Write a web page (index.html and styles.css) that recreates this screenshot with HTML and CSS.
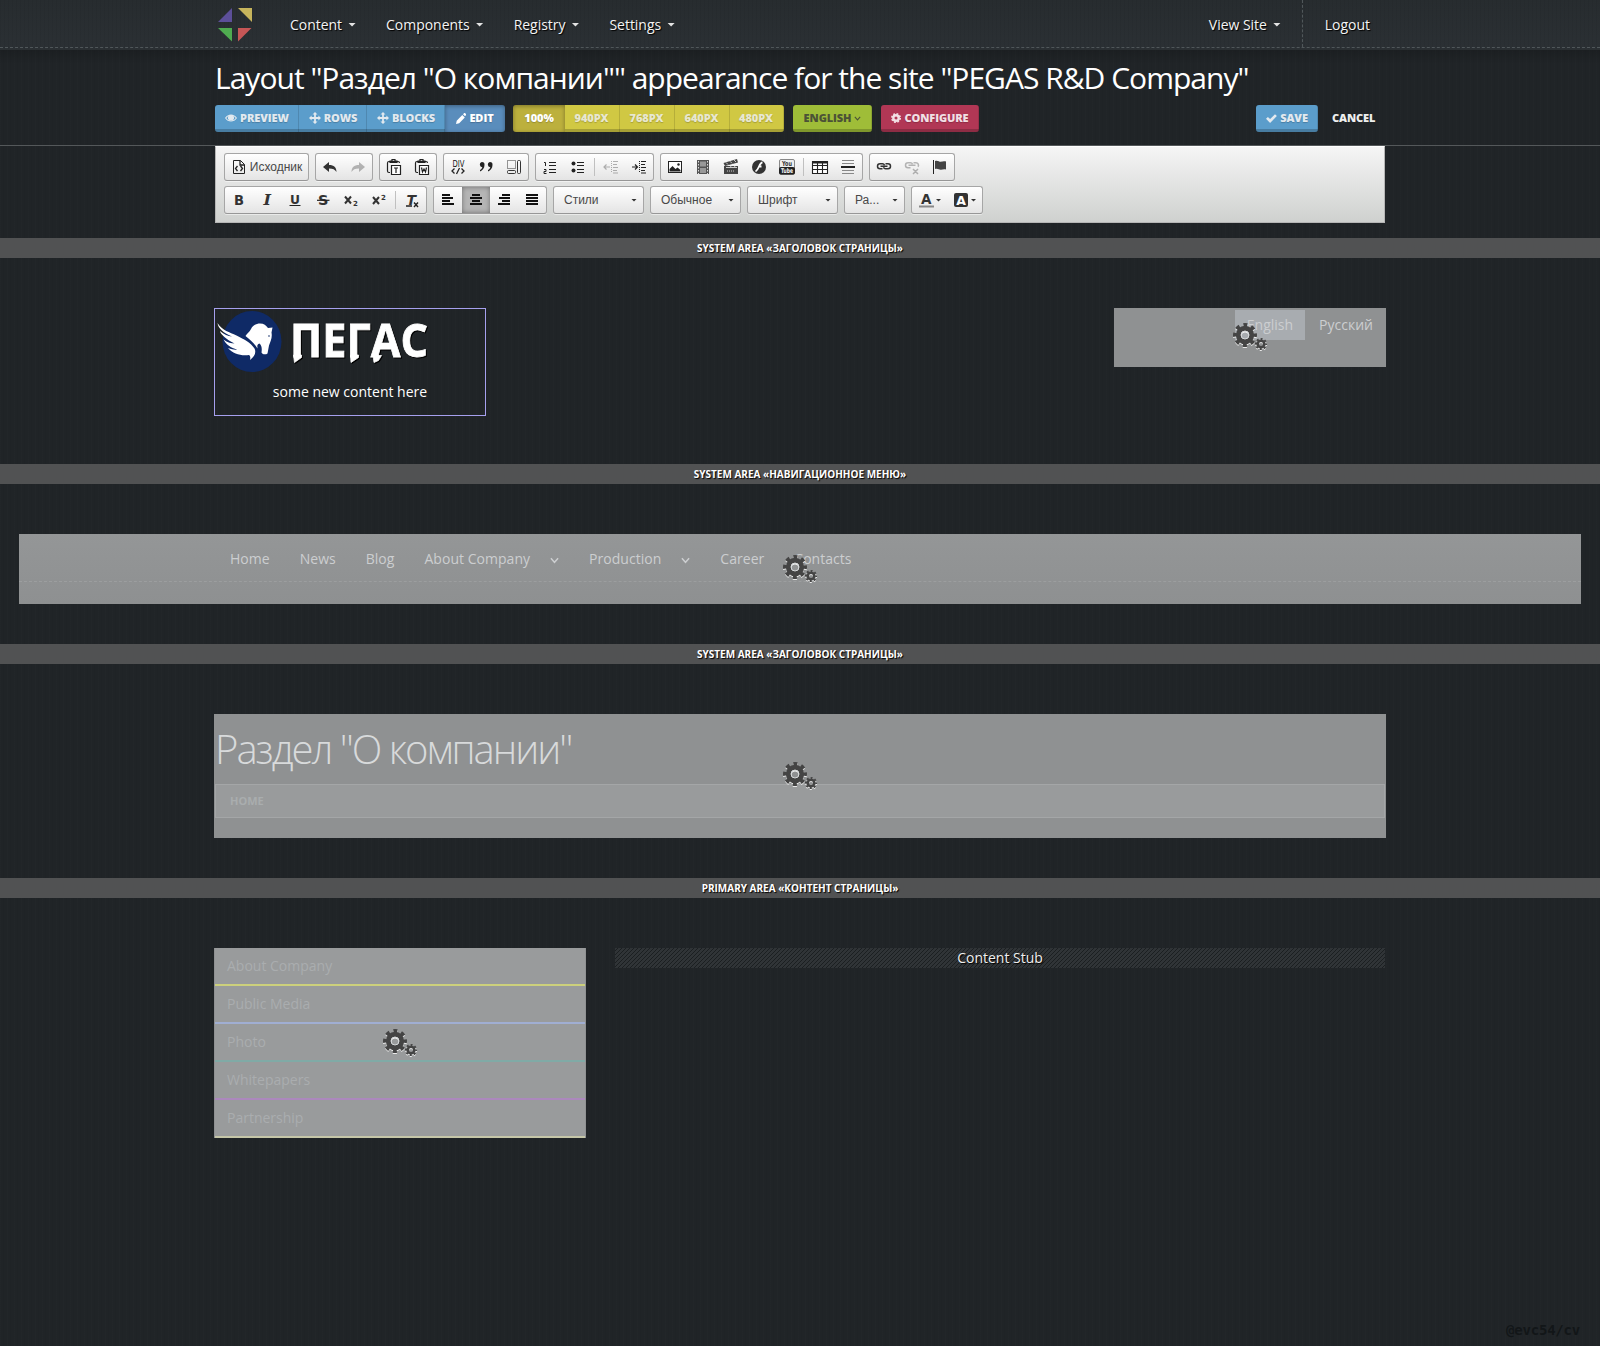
FILE: index.html
```html
<!DOCTYPE html>
<html lang="en">
<head>
<meta charset="utf-8">
<title>Layout appearance</title>
<link rel="stylesheet" href="styles.css">
</head>
<body>
<svg class="sprite" width="0" height="0">
  <symbol id="gears" viewBox="0 0 35 28">
    <g fill="none" stroke="#444">
      <circle cx="12" cy="12" r="10" stroke-width="4" stroke-dasharray="3.9 3.954" stroke-dashoffset="1.95"/>
      <circle cx="12" cy="12" r="6.6" stroke-width="5.2"/>
      <circle cx="28" cy="21" r="5" stroke-width="2.2" stroke-dasharray="1.9 2.027" stroke-dashoffset=".95"/>
      <circle cx="28" cy="21" r="3.3" stroke-width="2.6"/>
      <circle cx="12" cy="12" r="4" stroke="#d5d8da" stroke-width="1"/>
    </g>
  </symbol>
  <symbol id="move" viewBox="0 0 12 12"><path d="M6 0l2.500 2.600H6.900v2.500h2.500V3.500L12 6 9.400 8.500V6.900H6.900v2.500h1.600L6 12 3.500 9.400h1.600V6.900H2.600v1.600L0 6l2.600-2.500v1.600h2.500V2.600H3.500z"/></symbol>
  <symbol id="chev" viewBox="0 0 8 6"><path d="M.8 1L4 4.600 7.200 1" fill="none" stroke="currentColor" stroke-width="1.300"/></symbol>
</svg>

<header class="navbar">
  <div class="container nav-row">
    <a class="brand"><svg width="34" height="34" viewBox="0 0 34 34"><path fill="#5c4f99" d="M14 0v14H0z"/><path fill="#c6b45c" d="M20 0h14v14z"/><path fill="#4fab50" d="M0 20h14v13.500z"/><path fill="#c65656" d="M20 20h13.500L20 33.500z"/></svg></a>
    <nav class="menu"><a>Content<i class="caret"></i></a><a>Components<i class="caret"></i></a><a>Registry<i class="caret"></i></a><a>Settings<i class="caret"></i></a></nav>
    <nav class="menu side"><a class="view">View Site<i class="caret"></i></a><a class="logout">Logout</a></nav>
  </div>
</header>

<section class="heading">
  <div class="container">
    <h1>Layout "Раздел "О компании"" appearance for the site "PEGAS R&amp;D Company"</h1>
    <div class="actions">
      <div class="group blue">
        <a class="btn w84"><svg width="12" height="10" viewBox="0 0 12 10"><path fill-rule="evenodd" d="M0 5C2.800.2 9.200.2 12 5 9.200 9.800 2.800 9.800 0 5zm1.300 0c2.200 3.500 7.200 3.500 9.400 0C9.700 3.600 8.500 2.900 8.200 2.700a3 3 0 1 1-4.400 0C3 3.100 2 3.900 1.300 5z"/><circle cx="6" cy="4.600" r="1.700"/></svg>PREVIEW</a><a class="btn w68"><svg width="12" height="12"><use href="#move"/></svg>ROWS</a><a class="btn w78"><svg width="12" height="12"><use href="#move"/></svg>BLOCKS</a><a class="btn w60 active"><svg width="10" height="11" viewBox="0 0 10 11"><path d="M0 11l.7-3.300L6.300 2l2.500 2.600-5.600 5.700zM7 1.300L8 .3c.4-.4.900-.3 1.300 0l.6.700c.3.400.3.900 0 1.200l-.9 1z"/></svg>EDIT</a>
      </div>
      <div class="group yellow"><a class="btn w52 active">100%</a><a class="btn w55">940PX</a><a class="btn w55">768PX</a><a class="btn w55">640PX</a><a class="btn w54">480PX</a></div>
      <div class="group green"><a class="btn w79">ENGLISH<svg class="down" width="7" height="5"><use href="#chev"/></svg></a></div>
      <div class="group red"><a class="btn w98"><svg width="10" height="10" viewBox="0 0 10 10"><circle cx="5" cy="5" r="2.700" fill="none" stroke="currentColor" stroke-width="2.400"/><circle cx="5" cy="5" r="4.200" fill="none" stroke="currentColor" stroke-width="1.600" stroke-dasharray="1.800 1.500"/></svg>CONFIGURE</a></div>
      <div class="group blue save"><a class="btn w62"><svg width="11" height="9" viewBox="0 0 11 9"><path d="M0 4.800l1.900-1.900 2.200 2.200L9 .2l1.900 1.900L4.100 9z"/></svg>SAVE</a></div>
      <a class="cancel">CANCEL</a>
    </div>
  </div>
</section>

<div class="container editor">
  <div class="tools">
    <div class="tg"><a class="tb source"><svg viewBox="0 0 16 16"><path d="M2.500 1.500h7l4 4v9h-11z" fill="none" stroke="#222"/><path d="M9 1.500V6h4.500M6.500 7L4.500 9.500l2 2.500M9.500 7l2 2.500-2 2.500" fill="none" stroke="#222" stroke-width="1.300"/></svg>Исходник</a></div>
    <div class="tg"><a class="tb"><svg viewBox="0 0 16 16"><path d="M1 8l6-5v3c5 0 7.500 2.500 7.500 7C13 10.500 11 9.500 7 9.500V13z" fill="#333"/></svg></a><a class="tb off"><svg viewBox="0 0 16 16"><path d="M15 8L9 3v3c-5 0-7.500 2.500-7.500 7C3 10.500 5 9.500 9 9.500V13z" fill="#333"/></svg></a></div>
    <div class="tg"><a class="tb"><svg viewBox="0 0 16 16"><path d="M4 13.500H3q-1.500 0-1.500-1.500V4q0-1.500 1.500-1.500h9q1.500 0 1.500 1.500M4 3.500V2h2V.7h3V2h2v1.500z" fill="none" stroke="#222" stroke-width="1.200"/><path d="M5.500 6.500h9v9h-9zM8 9h4M10 9v5" fill="#fff" stroke="#222" stroke-width="1.200"/></svg></a><a class="tb"><svg viewBox="0 0 16 16"><path d="M4 13.500H3q-1.500 0-1.500-1.500V4q0-1.500 1.500-1.500h9q1.500 0 1.500 1.500M4 3.500V2h2V.7h3V2h2v1.500z" fill="none" stroke="#222" stroke-width="1.200"/><path d="M5.500 6.500h9v9h-9zM7.500 8.500l1 4.500L10 10l1.500 3 1-4.500" fill="#fff" stroke="#222" stroke-width="1.200"/></svg></a></div>
    <div class="tg"><a class="tb"><svg viewBox="0 0 16 16"><text class="thin" x="2.500" y="7.500" font-size="9" textLength="12" lengthAdjust="spacingAndGlyphs">DIV</text><path d="M4.500 9.500L2 12l2.500 2.500M11.500 9.500L14 12l-2.500 2.500M9.500 9l-3 6" fill="none" stroke="#222" stroke-width="1.300"/></svg></a><a class="tb"><svg viewBox="0 0 16 16"><path d="M3.800 3A2.700 2.700 0 0 1 6.500 6c0 3-2 5.500-4.500 6.500V11c1.300-.6 2.100-1.600 2.300-2.700A2.700 2.700 0 0 1 3.800 3zm8 0a2.700 2.700 0 0 1 2.700 3c0 3-2 5.500-4.500 6.500V11c1.300-.6 2.100-1.600 2.300-2.700A2.700 2.700 0 0 1 11.800 3z"/></svg></a><a class="tb"><svg viewBox="0 0 16 16"><g fill="none" stroke="#333"><path d="M1.500 1.500h8v8h-8z" stroke-dasharray="1 1"/><rect x="1.500" y="11.500" width="8" height="3" rx="1"/><rect x="11.500" y="1.500" width="3" height="13" rx="1"/></g></svg></a></div>
    <div class="tg"><a class="tb"><svg viewBox="0 0 16 16"><path d="M2 3.500h1.500V7M2 10.500h2v2H2v2h2.500" fill="none" stroke="#222"/><path d="M7 3.500h7M7 6.500h7M7 10.500h7M7 13.500h7" stroke="#222" stroke-width="1.200"/></svg></a><a class="tb"><svg viewBox="0 0 16 16"><circle cx="3.500" cy="4.500" r="2"/><circle cx="3.500" cy="11.500" r="2"/><path d="M7 3.500h7M7 6.500h7M7 10.500h7M7 13.500h7" stroke="#222" stroke-width="1.200"/></svg></a><i class="sep"></i><a class="tb off"><svg viewBox="0 0 16 16"><path d="M8.500 2v12" stroke="#222" stroke-dasharray="1 1"/><path d="M10 2.500h5M10 5.500h4M10 8.500h5M10 11.500h4M10 14h5M1 8h6M3.500 5.500L1 8l2.500 2.500" fill="none" stroke="#222" stroke-width="1.200"/></svg></a><a class="tb"><svg viewBox="0 0 16 16"><path d="M8.500 2v12" stroke="#222" stroke-dasharray="1 1"/><path d="M10 2.500h5M10 5.500h4M10 8.500h5M10 11.500h4M10 14h5M1 8h5M4 5.500L6.500 8 4 10.500" fill="none" stroke="#222" stroke-width="1.200"/></svg></a></div>
    <div class="tg"><a class="tb"><svg viewBox="0 0 16 16"><rect x="1.500" y="2.500" width="13" height="11" fill="#fff" stroke="#222"/><path d="M2.500 12.500V10l3-3 3 3 2-1.500 3 2.500v1.500z"/><circle cx="11.500" cy="5.500" r="1.200"/></svg></a><a class="tb"><svg viewBox="0 0 16 16"><path fill="#555" d="M2 1h12v14H2z"/><path d="M5 2.500h6v5H5zM5 9h6v5H5z" fill="#999"/><path d="M3.500 2v13M12.500 2v13" stroke="#ddd" stroke-dasharray="1.500 1.500"/></svg></a><a class="tb"><svg viewBox="0 0 16 16"><path d="M1 7h14v8H1zM.5 4L14 0l1 3.500L2 7z" fill="#444"/><path d="M3 3.500l2 2M7 2.300l2 2M11 1l2 2M3 8.500h11M8 7l-1 2M12 7l-1 2" stroke="#ccc"/><path d="M4 12h8" stroke="#888" stroke-width="2" stroke-dasharray="1 1"/></svg></a><a class="tb"><svg viewBox="0 0 16 16"><circle cx="8" cy="8" r="7" fill="#333"/><path d="M11.500 3.500C8 3.500 8 11 4.500 12.500M7.500 7.500h3" fill="none" stroke="#fff" stroke-width="1.800"/></svg></a><a class="tb"><svg viewBox="0 0 16 16"><rect x=".5" y=".5" width="15" height="15" rx="1.500" fill="#eee" stroke="#888"/><text x="3" y="7" font-size="7" textLength="10" lengthAdjust="spacingAndGlyphs">You</text><rect x="0" y="8" width="16" height="7.500" rx="2"/><text class="inv" x="2" y="14" font-size="6.500" textLength="12" lengthAdjust="spacingAndGlyphs">Tube</text></svg></a><i class="sep"></i><a class="tb"><svg viewBox="0 0 16 16"><path d="M.5 2.500h15v12H.5zM.5 6.500h15M.5 10.500h15M5.500 4v10.500M10.500 4v10.500" fill="#fff" stroke="#222" stroke-width="1.100"/><path d="M0 2h16v2.500H0z"/></svg></a><a class="tb"><svg viewBox="0 0 16 16"><path d="M2 1.500h12M2 4.500h12M2 11.500h12M2 14.500h12" stroke="#888"/><path d="M1 7h14v2H1z"/></svg></a></div>
    <div class="tg"><a class="tb"><svg viewBox="0 0 16 16"><g fill="none" stroke="#333" stroke-width="1.500"><path d="M6.500 9.800H4a2.500 2.500 0 0 1 0-5h2.500q1.500 0 2 1.500M9.500 4.800H12a2.500 2.500 0 0 1 0 5H9.500q-1.500 0-2-1.500M4.500 7.300h7"/></g></svg></a><a class="tb off"><svg viewBox="0 0 16 16"><g fill="none" stroke="#333" stroke-width="1.500"><path d="M6.500 8.800H4a2.500 2.500 0 0 1 0-5h2.500q1.500 0 2 1.500M9.500 3.800H12a2.500 2.500 0 0 1 2 4M4.500 6.300h7M9 10l5 5M14 10l-5 5"/></g></svg></a><a class="tb"><svg viewBox="0 0 16 16"><path d="M1.500 1v14" stroke="#222"/><path d="M3 2c3-1 4 1 6 .8 2-.2 3-.8 5-.3v8c-2-.5-3.500 0-5 .2C7 11 6 9 3 10z" fill="#444"/></svg></a></div>
  </div>
  <div class="tools">
    <div class="tg"><a class="tb"><svg viewBox="0 0 16 16"><text x="3" y="13" font-size="14.500" textLength="10" lengthAdjust="spacingAndGlyphs">B</text></svg></a><a class="tb"><svg viewBox="0 0 16 16"><text x="4.500" y="13" font-size="14.500" font-style="italic" class="serif" textLength="7.500" lengthAdjust="spacingAndGlyphs">I</text></svg></a><a class="tb"><svg viewBox="0 0 16 16"><text x="3" y="11.500" font-size="13" textLength="10" lengthAdjust="spacingAndGlyphs">U</text><path d="M2.500 13.500h11" stroke="#222"/></svg></a><a class="tb"><svg viewBox="0 0 16 16"><text x="3" y="13" font-size="14.500">S</text><path d="M2 8.300h12.500" stroke="#222" stroke-width="1.200"/></svg></a><a class="tb"><svg viewBox="0 0 16 16"><path d="M2 4.500l6 7M8 4.500l-6 7" stroke="#333" stroke-width="2"/><text x="10" y="14" font-size="7">2</text></svg></a><a class="tb"><svg viewBox="0 0 16 16"><path d="M2 5l6 7M8 5l-6 7" stroke="#333" stroke-width="2"/><text x="10" y="7.500" font-size="7">2</text></svg></a><i class="sep"></i><a class="tb"><svg viewBox="0 0 16 16"><text x="2.500" y="12.500" font-size="14" font-style="italic">T</text><path d="M2 14h6M10 10.500l4 4.500M14 10.500L10 15" stroke="#222" stroke-width="1.400"/></svg></a></div>
    <div class="tg"><a class="tb"><svg viewBox="0 0 16 16"><path d="M2 3h8M2 6h11M2 9h8M2 12h12" stroke="#111" stroke-width="1.800"/></svg></a><a class="tb on"><svg viewBox="0 0 16 16"><path d="M4 3h8M2 6h12M4 9h8M2 12h12" stroke="#111" stroke-width="1.800"/></svg></a><a class="tb"><svg viewBox="0 0 16 16"><path d="M6 3h8M3 6h11M6 9h8M2 12h12" stroke="#111" stroke-width="1.800"/></svg></a><a class="tb"><svg viewBox="0 0 16 16"><path d="M2 3h12M2 6h12M2 9h12M2 12h12" stroke="#111" stroke-width="1.800"/></svg></a></div>
    <div class="combo">Стили<i class="arr"></i></div><div class="combo">Обычное<i class="arr"></i></div><div class="combo">Шрифт<i class="arr"></i></div><div class="combo small">Ра...<i class="arr"></i></div>
    <div class="tg"><a class="tb color"><svg viewBox="0 0 16 16"><text x="3" y="11.500" font-size="13.500">A</text><path d="M1 14.500h15" stroke="#888" stroke-width="2"/></svg><i class="arr"></i></a><a class="tb color"><svg viewBox="0 0 16 16"><rect x="1" y="1" width="14" height="14" rx="2" fill="#333"/><text class="inv" x="3.200" y="12.500" font-size="12.500">A</text></svg><i class="arr"></i></a></div>
  </div>
</div>

<div class="area first">SYSTEM AREA «ЗАГОЛОВОК СТРАНИЦЫ»</div>
<div class="wrap split">
  <div class="logo-block">
    <svg class="logo" width="270" height="64" viewBox="0 0 270 64">
      <g transform="translate(-1 -1)">
      <ellipse cx="38" cy="33.500" rx="29.500" ry="30.500" fill="#0f2a66"/>
      <path fill="#fff" d="M3.500 15c5 8 12 9 19 12.500 8 4 14 7 18 13 2 4 0 8-4.500 11.500.5-2 .5-4-1-5-8 1-16-1-21-7 4 1.500 7 2 9 1.500-6-1.500-11-5-13.500-10 4 3 8 4 11 4C13 32 6 26 6 23c4 3.500 8 5 12 5.500C9 25 4 20 3.500 15z"/>
      <path fill="#fff" d="M31.500 28c2-3 4-4 5.500-7 2-4 6-5.500 9-5.500 4 0 6 2 8 4.500l4.500-.5-1 5c1 5-1 9-2.500 13-.5 3-1 5-1.500 8-2 1.500-5 1-6-1 .5-3 .5-7-2-9-3 1-2 3-2 5-3-5-7-8.500-12-12.500z"/>
      <circle cx="55" cy="28" r=".8" fill="#0f2a66"/>
      </g>
      <g class="wordmark">
        <text class="word" x="75" y="48" textLength="138" lengthAdjust="spacingAndGlyphs">ПЕГАС</text>
        <path d="M78.500 46h8v2.500l-7 5zM136 46h-.5l.5 7.500 7.500-5V46zM158 46.500h8.500l-3 5-4.500 2z"/>
      </g>
    </svg>
    <p>some new content here</p>
  </div>
  <div class="widget langs"><a class="cur">English</a><a>Русский</a><svg class="gear"><use href="#gears"/></svg></div>
</div>

<div class="area second">SYSTEM AREA «НАВИГАЦИОННОЕ МЕНЮ»</div>
<div class="widget navblock">
  <div class="links"><a>Home</a><a>News</a><a>Blog</a><a>About Company<svg width="9" height="7"><use href="#chev"/></svg></a><a>Production<svg width="9" height="7"><use href="#chev"/></svg></a><a>Career</a><a>Contacts</a></div>
  <svg class="gear"><use href="#gears"/></svg>
</div>

<div class="area third">SYSTEM AREA «ЗАГОЛОВОК СТРАНИЦЫ»</div>
<div class="wrap">
  <div class="widget titleblock"><h2>Раздел "О компании"</h2><div class="crumbs">HOME</div><svg class="gear"><use href="#gears"/></svg></div>
</div>

<div class="area fourth">PRIMARY AREA «КОНТЕНТ СТРАНИЦЫ»</div>
<div class="wrap split">
  <div class="widget sidemenu"><a class="c1">About Company</a><a class="c2">Public Media</a><a class="c3">Photo</a><a class="c4">Whitepapers</a><a class="c5">Partnership</a><svg class="gear"><use href="#gears"/></svg></div>
  <div class="stub">Content Stub</div>
</div>
<footer>@evc54/cv</footer>
</body>
</html>
```
FILE: styles.css
```css
* { box-sizing: border-box; }
body {
  margin: 0;
  min-height: 1346px;
  display: flex;
  flex-direction: column;
  background: #202427 repeating-linear-gradient(90deg, rgba(255,255,255,.006) 0 1px, transparent 1px 3px, rgba(0,0,0,.03) 3px 4px, transparent 4px 7px);
  color: #fff;
  font: 14px/20px "Open Sans", "Noto Sans", sans-serif;
}
.sprite { position: absolute; }
.container { width: 1170px; margin: 0 auto; }
h1, h2, p { margin: 0; font-weight: 400; }

.navbar {
  height: 50px;
  background: repeating-linear-gradient(90deg, rgba(0,0,0,.04) 0 1px, transparent 1px 4px), linear-gradient(#272c2f, #2b3034);
  border-bottom: 1px solid #2a2f32;
}
.navbar::after { content: ""; display: block; border-top: 1px dashed #50575a; }
.nav-row { display: flex; height: 47px; }
.brand { width: 60px; padding: 8px 3px; }
.menu { display: flex; }
.menu a { display: flex; align-items: center; padding: 2px 15px 0; text-shadow: 1px 1px 1px #000; color: #f4f4f4; letter-spacing: -.03px; }
.menu.side { margin-left: auto; }
.menu .view { padding-right: 21px; }
.menu .logout { border-left: 1px dashed #50575a; padding-left: 22px; }
.caret { width: 8px; height: 4px; margin-left: 6px; background: #e4e4e4; clip-path: polygon(0 0, 100% 0, 50% 100%); }

.heading { height: 96px; border-bottom: 1px solid #54585a; padding-top: 8px; background: linear-gradient(rgba(0,0,0,.15), transparent 14px); }
h1 { font-size: 30px; line-height: 40px; letter-spacing: -.985px; white-space: nowrap; }
.actions { display: flex; margin-top: 7px; height: 27px; font-weight: 800; font-size: 11px; align-items: center; }
.group { display: flex; border-radius: 3px; overflow: hidden; margin-right: 9px; }
.group:first-child { margin-right: 8px; }
.btn { display: flex; align-items: center; justify-content: center; gap: 3px; height: 27px; padding-bottom: 1px; letter-spacing: -.07px; white-space: nowrap; box-shadow: inset 0 -3px rgba(0,0,0,.2), inset -1px 0 rgba(0,0,0,.13); color: #e2e9ef; text-shadow: 0 1px 1px rgba(0,0,0,.2); }
.btn svg { fill: currentColor; }
.w84 { width: 84px; } .w68 { width: 68px; } .w78 { width: 78px; } .w60 { width: 60px; } .w52 { width: 52px; } .w55 { width: 55px; } .w54 { width: 54px; } .w79 { width: 79px; } .w98 { width: 98px; } .w62 { width: 62px; }
.blue .btn { background: #5b9dcb; }
.yellow .btn { background: #d0c843; color: #e8e7cf; padding-right: 2px; }
.green .btn { background: #9fbd38; color: #4b5236; text-shadow: none; }
.red .btn { background: #b13755; color: #f2dfe4; }
.group .btn.active { color: #fff; box-shadow: inset 0 1px 4px rgba(0,0,0,.35); }
.blue .btn.active { background: #5a8dbc; }
.yellow .btn.active { background: #bcb03d; padding-right: 0; }
.save { margin: 0 14px 0 auto; }
.cancel { width: 53px; color: #eee; padding-bottom: 1px; letter-spacing: -.1px; }

.editor { height: 77px; padding: 7px 8px; background: linear-gradient(#f5f5f5, #cfd1cf); border: 1px solid #b6b6b6; border-top-color: #fff; color: #484848; font: 12px "Liberation Sans", sans-serif; }
.tools { display: flex; gap: 6px; height: 28px; margin-bottom: 5px; }
.editor .tools:first-child { margin-top: -1px; }
.tg, .combo { display: flex; height: 28px; border: 1px solid #a6a6a6; border-bottom-color: #979797; border-radius: 3px; background: linear-gradient(#fff, #e4e4e4); box-shadow: 0 1px 0 rgba(255,255,255,.5); }
.tb { display: flex; width: 28px; align-items: center; justify-content: center; }
.tb svg { width: 16px; height: 16px; fill: #222; flex: none; overflow: visible; }
.tb text { font-family: "DejaVu Sans", sans-serif; font-weight: 700; fill: #333; }
.tb text.thin { font-weight: 400; fill: #111; }
.tb text.serif { font-family: "DejaVu Serif", serif; }
.tb text.inv { fill: #fff; }
.tb.source { width: 83px; gap: 3px; font-size: 12px; }
.off { opacity: .33; }
.on { background: #b5b5b5; box-shadow: inset 0 0 5px rgba(0,0,0,.4); }
.sep { width: 1px; height: 18px; margin: 4px 2px; background: #c0c0c0; }
.combo { width: 91px; padding: 0 6px 0 10px; align-items: center; justify-content: space-between; }
.combo.small { width: 61px; }
.arr { width: 6px; height: 3px; background: #333; clip-path: polygon(0 0, 100% 0, 50% 100%); }
.tb.color { width: 35px; gap: 2px; }

.area { height: 20px; flex: none; background: #515253; font-size: 10px; font-weight: 700; text-align: center; text-shadow: 1px 1px 1px #000; }
.area.first { margin: 15px 0 50px; }
.area.second { margin: 48px 0 50px; }
.area.third { margin: 40px 0 50px; }
.area.fourth { margin: 40px 0 50px; }
.wrap { width: 1172px; margin: 0 auto; }
.split { display: flex; justify-content: space-between; align-items: flex-start; }
.logo-block { width: 272px; height: 108px; border: 1px solid #a6a0ee; text-align: center; }
.logo { display: block; overflow: visible; }
.word { font: 700 47px "Open Sans", sans-serif; }
.wordmark { fill: #fff; stroke: #fff; stroke-width: .8; filter: drop-shadow(1.5px 1.5px 0 #000); }
.logo-block p { padding-top: 9px; }

.widget { position: relative; background: #8f9192; color: #ccced0; }
.gear { position: absolute; left: 50%; top: 50%; width: 35px; height: 28px; margin: -14px 0 0 -17px; filter: drop-shadow(0 1px 0 rgba(255,255,255,.8)); }
.langs { width: 272px; height: 59px; display: flex; justify-content: flex-end; padding: 2px 1px; }
.langs .gear { margin-top: -15px; }
.langs a { height: 30px; line-height: 29px; padding: 0 12px; }
.langs .cur { background: #a8acb0; margin-right: 2px; }
.navblock { width: 1562px; height: 70px; margin: 0 auto; background: linear-gradient(#949697, #8e9091); }
.links { display: flex; height: 48px; padding: 3px 196px 0; border-bottom: 1px dashed #9c9e9f; align-items: center; }
.links a { padding: 0 15px; line-height: 20px; letter-spacing: .03px; }
.links svg { margin: 0 0 0 20px; }
.titleblock { height: 124px; padding: 10px 1px; }
h2 { font-size: 40px; font-weight: 300; line-height: 50px; letter-spacing: -2px; height: 60px; color: #d8dadb; }
.crumbs { height: 34px; border: 1px solid #a4a6a7; background: #999b9c; padding: 0 14px; line-height: 32px; font-size: 11px; font-weight: 700; color: #a9adae; }
.sidemenu { width: 372px; height: 190px; padding: 0 1px; background: #8f9192; }
.sidemenu a { display: block; height: 38px; padding: 0 12px; line-height: 36px; background: #999b9c; color: #aaadaf; border-bottom: 2px solid; }
.sidemenu .c1 { border-bottom-color: #ccd07c; }
.sidemenu .c2 { border-bottom-color: #a0aed2; }
.sidemenu .c3 { border-bottom-color: #80aaa6; }
.sidemenu .c4 { border-bottom-color: #ac88bd; }
.sidemenu .c5 { border-bottom-color: #c5c6a8; }
.stub { width: 770px; height: 20px; margin-right: 1px; text-align: center; color: #eee; text-shadow: 1px 1px 1px #000; background: repeating-linear-gradient(135deg, #303437 0 1.800px, #1b1f21 1.800px 2.828px); }
footer { margin-top: auto; width: 74px; margin-left: 1506px; height: 26px; color: #121618; font: 700 14px/20px "DejaVu Sans Mono", monospace; letter-spacing: -.2px; white-space: nowrap; }
```
